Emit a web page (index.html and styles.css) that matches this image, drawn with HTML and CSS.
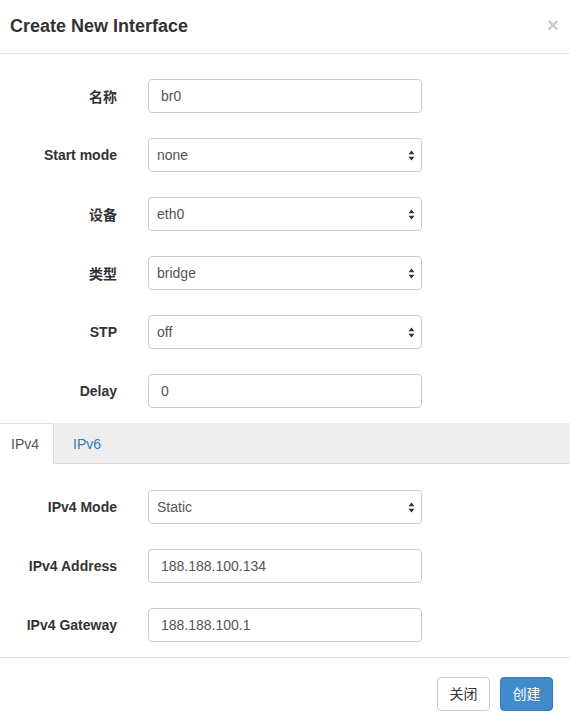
FILE: index.html
```html
<!DOCTYPE html>
<html>
<head>
<meta charset="utf-8">
<link rel="stylesheet" href="styles.css">
</head>
<body>
<div class="modal">
  <div class="modal-header">
    <h4 class="modal-title">Create New Interface</h4>
    <span class="close">×</span>
  </div>
  <div class="modal-body">
    <div class="fields">
      <div class="row"><label class="lbl">名称</label><div class="ctl input">br0</div></div>
      <div class="row"><label class="lbl">Start mode</label><div class="ctl select"><span>none</span><svg class="arrows" width="7" height="11" viewBox="0 0 7 11"><path d="M3.5 0.5 L6.5 4.2 H0.5 Z M3.5 10.5 L6.5 6.8 H0.5 Z" fill="#333"/></svg></div></div>
      <div class="row"><label class="lbl">设备</label><div class="ctl select"><span>eth0</span><svg class="arrows" width="7" height="11" viewBox="0 0 7 11"><path d="M3.5 0.5 L6.5 4.2 H0.5 Z M3.5 10.5 L6.5 6.8 H0.5 Z" fill="#333"/></svg></div></div>
      <div class="row"><label class="lbl">类型</label><div class="ctl select"><span>bridge</span><svg class="arrows" width="7" height="11" viewBox="0 0 7 11"><path d="M3.5 0.5 L6.5 4.2 H0.5 Z M3.5 10.5 L6.5 6.8 H0.5 Z" fill="#333"/></svg></div></div>
      <div class="row"><label class="lbl">STP</label><div class="ctl select"><span>off</span><svg class="arrows" width="7" height="11" viewBox="0 0 7 11"><path d="M3.5 0.5 L6.5 4.2 H0.5 Z M3.5 10.5 L6.5 6.8 H0.5 Z" fill="#333"/></svg></div></div>
      <div class="row"><label class="lbl">Delay</label><div class="ctl input">0</div></div>
    </div>
    <div class="tabs">
      <div class="tab active">IPv4</div>
      <div class="tab">IPv6</div>
    </div>
    <div class="fields fields-tab">
      <div class="row"><label class="lbl">IPv4 Mode</label><div class="ctl select"><span>Static</span><svg class="arrows" width="7" height="11" viewBox="0 0 7 11"><path d="M3.5 0.5 L6.5 4.2 H0.5 Z M3.5 10.5 L6.5 6.8 H0.5 Z" fill="#333"/></svg></div></div>
      <div class="row"><label class="lbl">IPv4 Address</label><div class="ctl input">188.188.100.134</div></div>
      <div class="row"><label class="lbl">IPv4 Gateway</label><div class="ctl input">188.188.100.1</div></div>
    </div>
  </div>
  <div class="modal-footer">
    <button class="btn btn-default">关闭</button>
    <button class="btn btn-primary">创建</button>
  </div>
</div>
</body>
</html>
```
FILE: styles.css
```css
* { box-sizing: border-box; }
html, body { margin: 0; padding: 0; background: #fff; }
body {
  font-family: "Liberation Sans", "Noto Sans CJK SC", Arial, sans-serif;
  font-size: 14px;
  color: #333;
  width: 570px;
  height: 727px;
  overflow: hidden;
}
.modal { width: 570px; }
.modal-header {
  display: flex;
  align-items: center;
  justify-content: space-between;
  height: 54px;
  padding: 0 11px 1px 10px;
  border-bottom: 1px solid #e5e5e5;
}
.modal-title {
  margin: 0;
  font-size: 18px;
  font-weight: bold;
  line-height: 22px;
  color: #333;
}
.close {
  font-size: 21px;
  font-weight: bold;
  color: #000;
  opacity: 0.2;
  line-height: 1;
  margin-top: -4px;
}
.modal-body { padding-top: 25px; }
.fields {
  display: flex;
  flex-direction: column;
  gap: 25px;
}
.fields-tab { padding-top: 26px; }
.row {
  display: flex;
  align-items: center;
  height: 34px;
}
.lbl {
  width: 117px;
  text-align: right;
  font-weight: bold;
  color: #333;
  margin-right: 31px;
}
.ctl {
  width: 274px;
  height: 34px;
  border: 1px solid #ccc;
  border-radius: 4px;
  background: #fff;
  color: #555;
  display: flex;
  align-items: center;
}
.input { padding: 0 12px; }
.select {
  padding: 0 6px 0 8px;
  justify-content: space-between;
}
.arrows { display: block; }
.tabs {
  margin-top: 15px;
  display: flex;
  height: 41px;
  background: #eee;
  border-bottom: 1px solid #ddd;
}
.tab {
  padding: 0 17px 0 19px;
  display: flex;
  align-items: center;
  color: #337ab7;
  height: 41px;
}
.tab.active {
  background: #fff;
  color: #555;
  border-right: 1px solid #ddd;
  border-top: 1px solid #ddd;
  width: 54px;
  padding-left: 11px;
  margin-bottom: -1px;
  height: 41px;
}
.modal-footer {
  margin-top: 15px;
  border-top: 1px solid #e5e5e5;
  padding: 19px 17px 0 0;
  display: flex;
  justify-content: flex-end;
  gap: 10px;
}
.btn {
  font-family: "Liberation Sans", "Noto Sans CJK SC", sans-serif;
  font-size: 14px;
  height: 34px;
  width: 53px;
  padding: 0;
  border-radius: 4px;
  border: 1px solid #ccc;
  line-height: 32px;
}
.btn-default { background: #fff; color: #333; }
.btn-primary { background: #428bca; border-color: #357ebd; color: #fff; }
```
